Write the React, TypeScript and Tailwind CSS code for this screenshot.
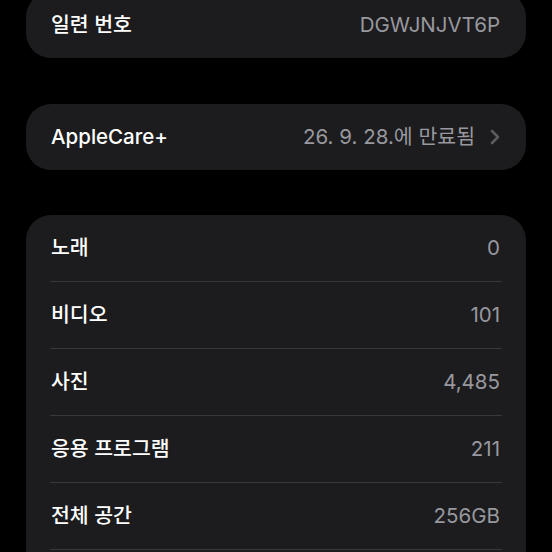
import React from "react";

const font = { fontFamily: '"Inter", "Noto Sans CJK KR", sans-serif' };

function Row({ label, value, chevron }: { label: string; value: string; chevron?: boolean }) {
  return (
    <div className="flex h-[66px] items-center justify-between pl-[25px] pr-[26px]">
      <span className="text-[20.5px] font-medium text-white">{label}</span>
      <div className="flex items-center gap-[15px]">
        <span className="text-[20.5px] text-[#98989e]">{value}</span>
        {chevron && (
          <svg width="10" height="16" viewBox="0 0 10 16">
            <path d="M2 2 L8 8 L2 14" fill="none" stroke="#5b5b60" strokeWidth="2.6" strokeLinecap="round" strokeLinejoin="round" />
          </svg>
        )}
      </div>
    </div>
  );
}

function Sep() {
  return <div className="mx-[24px] h-px bg-[#38383b]" />;
}

export default function App() {
  const rows = [
    ["노래", "0"],
    ["비디오", "101"],
    ["사진", "4,485"],
    ["응용 프로그램", "211"],
    ["전체 공간", "256GB"],
  ];
  return (
    <div className="h-[552px] w-[552px] overflow-hidden bg-black px-[26px]" style={font}>
      <div className="-mt-[8px] rounded-[25px] bg-[#1c1c1e]">
        <Row label="일련 번호" value="DGWJNJVT6P" />
      </div>
      <div className="mt-[46px] rounded-[25px] bg-[#1c1c1e]">
        <Row label="AppleCare+" value="26. 9. 28.에 만료됨" chevron />
      </div>
      <div className="mt-[45px] rounded-[25px] bg-[#1c1c1e]">
        {rows.map(([l, v]) => (
          <div key={l}>
            <Row label={l} value={v} />
            <Sep />
          </div>
        ))}
        <div className="h-[66px]" />
      </div>
    </div>
  );
}
